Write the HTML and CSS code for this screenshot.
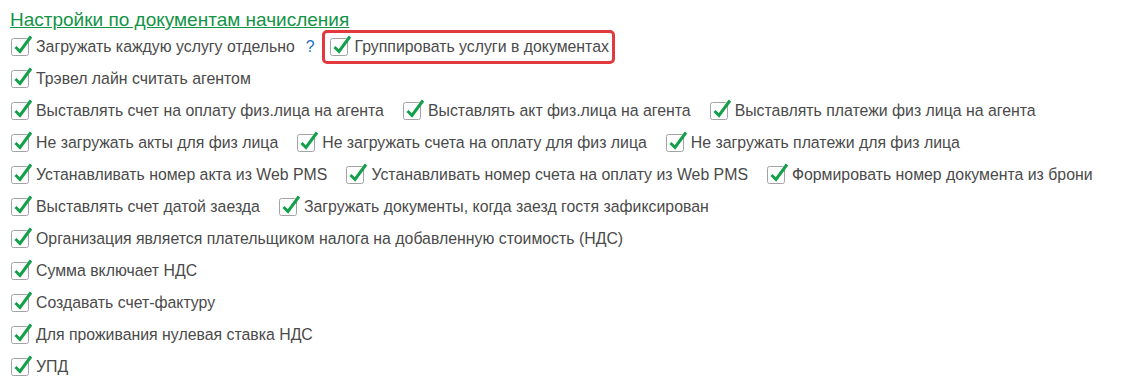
FILE: index.html
```html
<!DOCTYPE html>
<html lang="ru">

<head>
    <meta charset="UTF-8">
    <title>Настройки по документам начисления</title>
    <link rel="stylesheet" href="styles.css">
</head>

<body>
    <div class="settings">
        <a class="title" href="#">Настройки по документам начисления</a>

        <div class="row">
            <label class="check"><span class="box"></span>Загружать каждую услугу отдельно</label>
            <span class="help">?</span>
            <label class="check marked"><span class="box"></span>Группировать услуги в документах</label>
        </div>
        <div class="row">
            <label class="check"><span class="box"></span>Трэвел лайн считать агентом</label>
        </div>
        <div class="row">
            <label class="check"><span class="box"></span>Выставлять счет на оплату физ.лица на агента</label>
            <label class="check"><span class="box"></span>Выставлять акт физ.лица на агента</label>
            <label class="check"><span class="box"></span>Выставлять платежи физ лица на агента</label>
        </div>
        <div class="row">
            <label class="check"><span class="box"></span>Не загружать акты для физ лица</label>
            <label class="check"><span class="box"></span>Не загружать счета на оплату для физ лица</label>
            <label class="check"><span class="box"></span>Не загружать платежи для физ лица</label>
        </div>
        <div class="row">
            <label class="check"><span class="box"></span>Устанавливать номер акта из Web PMS</label>
            <label class="check"><span class="box"></span>Устанавливать номер счета на оплату из Web PMS</label>
            <label class="check"><span class="box"></span>Формировать номер документа из брони</label>
        </div>
        <div class="row">
            <label class="check"><span class="box"></span>Выставлять счет датой заезда</label>
            <label class="check"><span class="box"></span>Загружать документы, когда заезд гостя зафиксирован</label>
        </div>
        <div class="row">
            <label class="check"><span class="box"></span>Организация является плательщиком налога на добавленную стоимость (НДС)</label>
        </div>
        <div class="row">
            <label class="check"><span class="box"></span>Сумма включает НДС</label>
        </div>
        <div class="row">
            <label class="check"><span class="box"></span>Создавать счет-фактуру</label>
        </div>
        <div class="row">
            <label class="check"><span class="box"></span>Для проживания нулевая ставка НДС</label>
        </div>
        <div class="row">
            <label class="check"><span class="box"></span>УПД</label>
        </div>
    </div>

    <script>
        // every box on this form is ticked, so draw the same mark into each one
        var mark = '<svg width="24" height="22" viewBox="0 0 24 22">' +
            '<rect x="0.5" y="4.5" width="17" height="17" rx="2" fill="#fff" stroke="#a3a3a3"/>' +
            '<path d="M4.5 13 L9 17.5 L20 2.5" fill="none" stroke="#13a04a" stroke-width="3" stroke-linecap="butt"/>' +
            '</svg>';
        var boxes = document.querySelectorAll('.box');
        boxes.forEach(function (box) {
            box.innerHTML = mark;
        });
    </script>
</body>

</html>
```

FILE: styles.css
```css
* {
    box-sizing: border-box;
}

body {
    margin: 0;
    font-family: Arial, 'Liberation Sans', sans-serif;
    font-size: 15.85px;
    color: #4a4a4a;
    background-color: #fff;
}

.settings {
    padding: 9px 10px 0 10px;
    display: flex;
    flex-direction: column;
}

.title {
    align-self: flex-start;
    font-size: 19px;
    line-height: 22px;
    color: #139447;
    text-decoration: underline;
}

.row {
    height: 32px;
    display: flex;
    align-items: center;
    gap: 18px;
}

.check {
    display: flex;
    align-items: center;
    gap: 1px;
    white-space: nowrap;
}

.box {
    width: 24px;
    height: 22px;
    margin-top: -4px;
    margin-left: 1px;
    display: flex;
}

.help {
    margin-left: -7px;
    margin-right: -11px;
    color: #1f6fc5;
}

.marked {
    height: 34px;
    padding: 0 3px 0 4px;
    border: 3px solid #e2393f;
    border-radius: 5px;
}
```
